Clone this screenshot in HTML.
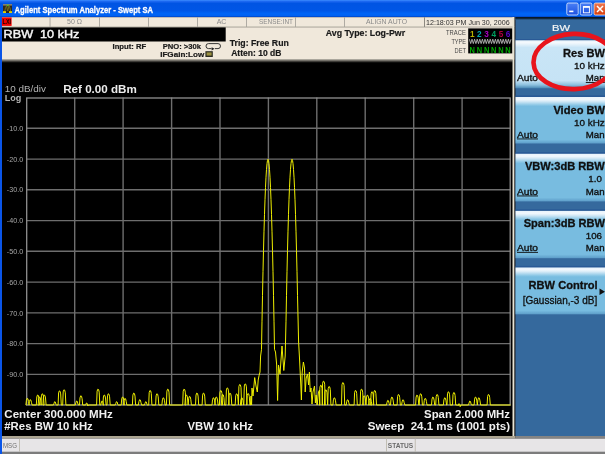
<!DOCTYPE html>
<html><head><meta charset="utf-8">
<style>
html,body{margin:0;padding:0;width:605px;height:454px;overflow:hidden;background:#000;}
svg{display:block;filter:blur(0.3px);font-family:"Liberation Sans",sans-serif;}
</style></head>
<body>
<svg width="605" height="454" viewBox="0 0 605 454">
<defs>
<linearGradient id="tb" x1="0" y1="0" x2="0" y2="1">
<stop offset="0" stop-color="#3d8dff"/>
<stop offset="0.09" stop-color="#1a66f0"/>
<stop offset="0.2" stop-color="#0054e3"/>
<stop offset="0.62" stop-color="#0056e6"/>
<stop offset="0.78" stop-color="#0064f6"/>
<stop offset="0.9" stop-color="#0062f2"/>
<stop offset="1" stop-color="#0040c0"/>
</linearGradient>
<linearGradient id="btnsel" x1="0" y1="0" x2="0" y2="1">
<stop offset="0" stop-color="#e8f3fb"/>
<stop offset="0.05" stop-color="#f4f9fd"/>
<stop offset="0.15" stop-color="#c9e5f6"/>
<stop offset="0.84" stop-color="#c6e3f5"/>
<stop offset="0.93" stop-color="#8cc0de"/>
<stop offset="1" stop-color="#4a88b4"/>
</linearGradient>
<linearGradient id="btn" x1="0" y1="0" x2="0" y2="1">
<stop offset="0" stop-color="#e8f3fb"/>
<stop offset="0.05" stop-color="#f2f8fd"/>
<stop offset="0.09" stop-color="#d8ebf7"/>
<stop offset="0.17" stop-color="#8ec8e6"/>
<stop offset="0.2" stop-color="#78bce0"/>
<stop offset="0.92" stop-color="#78bce0"/>
<stop offset="1" stop-color="#5c9cc8"/>
</linearGradient>
<linearGradient id="xbtn" x1="0" y1="0" x2="0" y2="1">
<stop offset="0" stop-color="#4a80f6"/>
<stop offset="1" stop-color="#1c50e0"/>
</linearGradient>
<linearGradient id="cbtn" x1="0" y1="0" x2="0" y2="1">
<stop offset="0" stop-color="#f07850"/>
<stop offset="1" stop-color="#d8400e"/>
</linearGradient>
<linearGradient id="ptop" x1="0" y1="0" x2="0" y2="1">
<stop offset="0" stop-color="#061420"/>
<stop offset="0.45" stop-color="#0e2236"/>
<stop offset="1" stop-color="#35699d"/>
</linearGradient>
</defs>

<!-- title bar -->
<rect x="0" y="0" width="605" height="17.2" fill="url(#tb)"/>
<rect x="3" y="4.2" width="9" height="8.8" fill="#2c2820"/>
<rect x="3" y="4.2" width="9" height="1.3" fill="#9c9480"/>
<rect x="6.8" y="4.6" width="1.8" height="1.6" fill="#58c020"/>
<path d="M4.5 12 L5.5 8 L6.5 6 L7.7 11 L9 6 L10 8 L10.8 12" stroke="#787018" stroke-width="0.9" fill="none"/>
<rect x="3" y="11.2" width="3" height="1.8" fill="#e0d000"/>
<rect x="9" y="11.2" width="3" height="1.8" fill="#e0d000"/>
<text x="14.6" y="13" font-size="9.6" font-weight="bold" fill="#ffffff" stroke="#ffffff" stroke-width="0.3" textLength="138.4" lengthAdjust="spacingAndGlyphs">Agilent Spectrum Analyzer - Swept SA</text>
<rect x="566.8" y="3" width="11.4" height="12" rx="1.5" fill="url(#xbtn)" stroke="#e8f0ff" stroke-width="0.8"/>
<rect x="569.2" y="10.6" width="4.2" height="1.6" fill="#fff"/>
<rect x="580.3" y="3" width="11.6" height="12" rx="1.5" fill="url(#xbtn)" stroke="#e8f0ff" stroke-width="0.8"/>
<rect x="583.4" y="6.6" width="6" height="6.2" fill="none" stroke="#fff" stroke-width="0.9"/>
<rect x="583.2" y="6.2" width="6.4" height="1.6" fill="#fff"/>
<rect x="594" y="3" width="12" height="12" rx="1.5" fill="url(#cbtn)" stroke="#f8e8e0" stroke-width="0.8"/>
<path d="M597 6 L603 12 M603 6 L597 12" stroke="#fff" stroke-width="1.5"/>

<!-- left border -->
<rect x="0" y="17" width="2" height="437" fill="#0a55e8"/>

<!-- status row -->
<rect x="2" y="17.2" width="512.5" height="9.8" fill="#f0e8db"/>
<rect x="2" y="26" width="512.5" height="1.2" fill="#cfcabd"/>
<rect x="1.9" y="17.4" width="9.7" height="8.5" fill="#f00000"/>
<text x="2.6" y="24.2" font-size="6.6" font-weight="bold" fill="#200000" textLength="8.4" lengthAdjust="spacingAndGlyphs">LXI</text>
<g fill="#a8a49c">
<rect x="49.6" y="17.2" width="0.9" height="9.8"/>
<rect x="99" y="17.2" width="0.9" height="9.8"/>
<rect x="148" y="17.2" width="0.9" height="9.8"/>
<rect x="197" y="17.2" width="0.9" height="9.8"/>
<rect x="246" y="17.2" width="0.9" height="9.8"/>
<rect x="295" y="17.2" width="0.9" height="9.8"/>
<rect x="344" y="17.2" width="0.9" height="9.8"/>
<rect x="424" y="17.2" width="1" height="9.8" fill="#8c8880"/>
</g>
<g font-size="7" fill="#8a8a8a" transform="translate(0,-0.4)">
<text x="74.5" y="24.8" text-anchor="middle">50 Ω</text>
<text x="221.5" y="24.8" text-anchor="middle">AC</text>
<text x="259" y="24.8" textLength="34" lengthAdjust="spacingAndGlyphs">SENSE:INT</text>
<text x="366" y="24.8" textLength="41" lengthAdjust="spacingAndGlyphs">ALIGN AUTO</text>
</g>
<text x="426" y="24.9" font-size="7.4" fill="#303030" textLength="83.6" lengthAdjust="spacingAndGlyphs">12:18:03 PM Jun 30, 2006</text>

<!-- info area -->
<rect x="2" y="27.2" width="512.5" height="32.4" fill="#f0e8db"/>
<rect x="2" y="59.5" width="510.5" height="1" fill="#c6c2b6"/>
<rect x="2" y="60.5" width="510.5" height="1" fill="#85817a"/>
<rect x="2" y="61.5" width="510.5" height="1" fill="#3a3834"/>
<rect x="2" y="27.4" width="223.7" height="14.1" fill="#000"/>
<text x="3.6" y="38.3" font-size="11.8" fill="#f4f4f4" stroke="#f4f4f4" stroke-width="0.45" textLength="75.8" lengthAdjust="spacingAndGlyphs" xml:space="preserve">RBW  10 kHz</text>
<g font-weight="bold" fill="#1a1a1a" stroke="#1a1a1a" stroke-width="0.2">
<text x="112.5" y="48.7" font-size="7.4" textLength="33.7" lengthAdjust="spacingAndGlyphs">Input: RF</text>
<text x="162.7" y="48.9" font-size="7.4" textLength="38.3" lengthAdjust="spacingAndGlyphs">PNO: &gt;30k</text>
<text x="160.2" y="57.2" font-size="7.4" textLength="44" lengthAdjust="spacingAndGlyphs">IFGain:Low</text>
<text x="229.7" y="45.6" font-size="9" textLength="59.1" lengthAdjust="spacingAndGlyphs">Trig: Free Run</text>
<text x="231.2" y="55.9" font-size="9" textLength="50.2" lengthAdjust="spacingAndGlyphs">Atten: 10 dB</text>
<text x="325.8" y="35.6" font-size="9" textLength="79.3" lengthAdjust="spacingAndGlyphs">Avg Type: Log-Pwr</text>
</g>
<path d="M211.5 48.6 L208.5 48.6 A2.5 2.5 0 0 1 208.5 43.6 L218 43.6 A2.5 2.5 0 0 1 218 48.6 L215 48.6" fill="none" stroke="#222" stroke-width="0.9"/>
<path d="M211.6 47.2 L214.6 48.8 L211.6 50.4 Z" fill="#222"/>
<rect x="205.4" y="51.2" width="7.4" height="5.8" fill="#2a2a20"/>
<rect x="206.6" y="52.4" width="5" height="3.2" fill="#9a9040"/>

<!-- trace legend -->
<rect x="468.2" y="28.4" width="44.2" height="25" fill="#000"/>
<g font-size="7.8" fill="#484848" text-anchor="end">
<text x="465.8" y="34.6" textLength="19.8" lengthAdjust="spacingAndGlyphs">TRACE</text>
<text x="466" y="44.2" textLength="14.6" lengthAdjust="spacingAndGlyphs">TYPE</text>
<text x="466" y="53.4" textLength="11.4" lengthAdjust="spacingAndGlyphs">DET</text>
</g>
<g font-size="9.2" font-weight="bold" text-anchor="middle">
<text x="472.2" y="36.6" fill="#b8b000" textLength="4.6" lengthAdjust="spacingAndGlyphs">1</text>
<text x="479.4" y="36.6" fill="#00a8b0" textLength="4.6" lengthAdjust="spacingAndGlyphs">2</text>
<text x="486.6" y="36.6" fill="#a800c0" textLength="4.6" lengthAdjust="spacingAndGlyphs">3</text>
<text x="493.8" y="36.6" fill="#00a060" textLength="4.6" lengthAdjust="spacingAndGlyphs">4</text>
<text x="501.0" y="36.6" fill="#b00040" textLength="4.6" lengthAdjust="spacingAndGlyphs">5</text>
<text x="508.0" y="36.6" fill="#5808c8" textLength="4.6" lengthAdjust="spacingAndGlyphs">6</text>
</g>
<path d="M469.4 39.2 L470.7 43.6 L472.0 39.2 L473.3 43.6 L474.6 39.2 L475.9 43.6 L477.2 39.2 L478.5 43.6 L479.8 39.2 L481.1 43.6 L482.4 39.2 L483.7 43.6 L485.0 39.2 L486.3 43.6 L487.6 39.2 L488.9 43.6 L490.2 39.2 L491.5 43.6 L492.8 39.2 L494.1 43.6 L495.4 39.2 L496.7 43.6 L498.0 39.2 L499.3 43.6 L500.6 39.2 L501.9 43.6 L503.2 39.2 L504.5 43.6 L505.8 39.2 L507.1 43.6 L508.4 39.2 L509.7 43.6 L511.0 39.2" stroke="#c8c8c8" stroke-width="0.8" fill="none"/>
<g font-size="8.6" font-weight="bold" fill="#00a800" text-anchor="middle">
<text x="472.2" y="52.9" textLength="5.4" lengthAdjust="spacingAndGlyphs">N</text>
<text x="479.4" y="52.9" textLength="5.4" lengthAdjust="spacingAndGlyphs">N</text>
<text x="486.6" y="52.9" textLength="5.4" lengthAdjust="spacingAndGlyphs">N</text>
<text x="493.8" y="52.9" textLength="5.4" lengthAdjust="spacingAndGlyphs">N</text>
<text x="501.0" y="52.9" textLength="5.4" lengthAdjust="spacingAndGlyphs">N</text>
<text x="508.0" y="52.9" textLength="5.4" lengthAdjust="spacingAndGlyphs">N</text>
</g>

<!-- graph area -->
<rect x="2" y="62.5" width="510.5" height="373.5" fill="#000"/>
<rect x="512.5" y="17" width="2" height="421" fill="#e8e4d4"/>
<rect x="514.5" y="17" width="1" height="421" fill="#404040"/>

<text x="4.8" y="92.2" font-size="9" fill="#b4b4b4" textLength="41.2" lengthAdjust="spacingAndGlyphs">10 dB/div</text>
<text x="4.8" y="101.3" font-size="9" font-weight="bold" fill="#b4b4b4" textLength="16.6" lengthAdjust="spacingAndGlyphs">Log</text>
<text x="63.2" y="92.5" font-size="11.4" font-weight="bold" fill="#ececec" textLength="73.6" lengthAdjust="spacingAndGlyphs">Ref 0.00 dBm</text>
<g font-size="7.2" fill="#a8a8a8"><text x="23.2" y="130.9" text-anchor="end">-10.0</text><text x="23.2" y="161.7" text-anchor="end">-20.0</text><text x="23.2" y="192.4" text-anchor="end">-30.0</text><text x="23.2" y="223.2" text-anchor="end">-40.0</text><text x="23.2" y="253.9" text-anchor="end">-50.0</text><text x="23.2" y="284.7" text-anchor="end">-60.0</text><text x="23.2" y="315.5" text-anchor="end">-70.0</text><text x="23.2" y="346.2" text-anchor="end">-80.0</text><text x="23.2" y="377.0" text-anchor="end">-90.0</text></g>

<g stroke="#6e6e6e" stroke-width="1.4">
<line x1="74.7" y1="97.6" x2="74.7" y2="405.1"/>
<line x1="123.1" y1="97.6" x2="123.1" y2="405.1"/>
<line x1="171.6" y1="97.6" x2="171.6" y2="405.1"/>
<line x1="220.0" y1="97.6" x2="220.0" y2="405.1"/>
<line x1="268.4" y1="97.6" x2="268.4" y2="405.1"/>
<line x1="316.8" y1="97.6" x2="316.8" y2="405.1"/>
<line x1="365.2" y1="97.6" x2="365.2" y2="405.1"/>
<line x1="413.7" y1="97.6" x2="413.7" y2="405.1"/>
<line x1="462.1" y1="97.6" x2="462.1" y2="405.1"/>
<line x1="26.3" y1="128.3" x2="510.5" y2="128.3"/>
<line x1="26.3" y1="159.1" x2="510.5" y2="159.1"/>
<line x1="26.3" y1="189.8" x2="510.5" y2="189.8"/>
<line x1="26.3" y1="220.6" x2="510.5" y2="220.6"/>
<line x1="26.3" y1="251.3" x2="510.5" y2="251.3"/>
<line x1="26.3" y1="282.1" x2="510.5" y2="282.1"/>
<line x1="26.3" y1="312.9" x2="510.5" y2="312.9"/>
<line x1="26.3" y1="343.6" x2="510.5" y2="343.6"/>
<line x1="26.3" y1="374.4" x2="510.5" y2="374.4"/>
</g>
<rect x="26.7" y="98" width="483.5" height="307" fill="none" stroke="#909090" stroke-width="1.3"/>
<polyline points="26.5,405.0 25.9,405.0 26.4,400.4 27.1,398.4 27.9,398.8 28.5,401.4 29.1,405.0 28.9,405.0 29.4,401.7 30.1,399.7 30.9,400.1 31.5,402.7 32.1,405.0 36.3,405.0 36.8,397.0 37.5,395.0 38.3,395.4 38.9,398.0 39.5,405.0 38.1,405.0 38.6,399.0 39.3,397.0 40.1,397.4 40.7,400.0 41.3,405.0 40.9,405.0 41.4,395.8 42.1,393.8 42.9,394.2 43.5,396.8 44.1,405.0 42.9,405.0 43.4,397.0 44.1,395.0 44.9,395.4 45.5,398.0 46.1,405.0 53.4,405.0 53.9,403.7 54.6,401.7 55.4,402.1 56.0,404.7 56.6,405.0 58.1,405.0 58.6,392.9 59.3,390.9 60.1,391.3 60.7,393.9 61.3,405.0 62.7,405.0 63.2,391.8 63.9,389.8 64.7,390.2 65.3,392.8 65.9,405.0 75.3,405.0 75.8,403.0 76.5,401.0 77.3,401.4 77.9,404.0 78.5,405.0 79.5,405.0 80.0,397.8 80.7,395.8 81.5,396.2 82.1,398.8 82.7,405.0 85.2,405.0 85.7,405.0 86.4,403.0 87.2,403.4 87.8,406.0 88.4,405.0 96.6,405.0 97.1,391.2 97.8,389.2 98.6,389.6 99.2,392.2 99.8,405.0 100.7,405.0 101.2,403.0 101.9,401.0 102.7,401.4 103.3,404.0 103.9,405.0 102.9,405.0 103.4,397.0 104.1,395.0 104.9,395.4 105.5,398.0 106.1,405.0 107.0,405.0 107.5,395.8 108.2,393.8 109.0,394.2 109.6,396.8 110.2,405.0 115.2,405.0 115.7,403.7 116.4,401.7 117.2,402.1 117.8,404.7 118.4,405.0 121.2,405.0 121.7,399.0 122.4,397.0 123.2,397.4 123.8,400.0 124.4,405.0 123.6,405.0 124.1,400.4 124.8,398.4 125.6,398.8 126.2,401.4 126.8,405.0 132.4,405.0 132.9,395.1 133.6,393.1 134.4,393.5 135.0,396.1 135.6,405.0 138.4,405.0 138.9,401.7 139.6,399.7 140.4,400.1 141.0,402.7 141.6,405.0 144.4,405.0 144.9,403.7 145.6,401.7 146.4,402.1 147.0,404.7 147.6,405.0 148.7,405.0 149.2,392.5 149.9,390.5 150.7,390.9 151.3,393.5 151.9,405.0 155.6,405.0 156.1,395.8 156.8,393.8 157.6,394.2 158.2,396.8 158.8,405.0 161.9,405.0 162.4,399.8 163.1,397.8 163.9,398.2 164.5,400.8 165.1,405.0 166.4,405.0 166.9,391.2 167.6,389.2 168.4,389.6 169.0,392.2 169.6,405.0 182.7,405.0 183.2,391.2 183.9,389.2 184.7,389.6 185.3,392.2 185.9,405.0 184.9,405.0 185.4,397.0 186.1,395.0 186.9,395.4 187.5,398.0 188.1,405.0 188.2,405.0 188.7,398.4 189.4,396.4 190.2,396.8 190.8,399.4 191.4,405.0 195.5,405.0 196.0,395.1 196.7,393.1 197.5,393.5 198.1,396.1 198.7,405.0 202.1,405.0 202.6,395.1 203.3,393.1 204.1,393.5 204.7,396.1 205.3,405.0 212.0,405.0 212.5,399.8 213.2,397.8 214.0,398.2 214.6,400.8 215.2,405.0 214.9,405.0 215.4,399.0 216.1,397.0 216.9,397.4 217.5,400.0 218.1,405.0 219.4,405.0 219.9,392.5 220.6,390.5 221.4,390.9 222.0,393.5 222.6,405.0 221.3,405.0 221.8,396.5 222.5,394.5 223.3,394.9 223.9,397.5 224.5,405.0 225.9,405.0 226.4,389.9 227.1,387.9 227.9,388.3 228.5,390.9 229.1,405.0 228.6,405.0 229.1,395.1 229.8,393.1 230.6,393.5 231.2,396.1 231.8,405.0 235.2,405.0 235.7,395.8 236.4,393.8 237.2,394.2 237.8,396.8 238.4,405.0 238.4,405.0 238.9,386.5 239.6,384.5 240.4,384.9 241.0,387.5 241.6,405.0 240.4,405.0 240.9,399.8 241.6,397.8 242.4,398.2 243.0,400.8 243.6,405.0 243.8,405.0 244.3,385.9 245.0,383.9 245.8,384.3 246.4,386.9 247.0,405.0 246.7,405.0 247.2,395.5 247.9,393.5 248.7,393.9 249.3,396.5 249.9,405.0 250.0,405.0 250.4,405.0 251.0,396.0 251.6,405.0 252.0,388.0 253.0,396.0 254.7,377.6 256.0,386.0 257.3,392.0 258.2,380.0 259.0,375.8 260.0,372.0 260.6,356.0 261.5,349.3 262.0,321.2 262.5,295.3 263.0,271.7 263.5,250.3 264.0,231.2 264.5,214.3 265.0,199.7 265.5,187.3 266.0,177.2 266.5,169.3 267.0,163.7 267.5,160.3 268.0,159.2 268.5,160.3 269.0,163.7 269.5,169.3 270.0,177.2 270.5,187.3 271.0,199.7 271.5,214.3 272.0,231.2 272.5,250.3 273.0,271.7 273.5,295.3 274.0,321.2 274.5,349.3 275.5,352.0 276.7,365.0 277.6,400.5 278.5,365.0 280.0,374.0 282.0,346.0 283.8,370.5 285.2,356.0 286.0,321.2 286.5,295.3 287.0,271.7 287.5,250.3 288.0,231.2 288.5,214.3 289.0,199.7 289.5,187.3 290.0,177.2 290.5,169.3 291.0,163.7 291.5,160.3 292.0,159.2 292.5,160.3 293.0,163.7 293.5,169.3 294.0,177.2 294.5,187.3 295.0,199.7 295.5,214.3 296.0,231.2 296.5,250.3 297.0,271.7 297.5,295.3 298.6,342.0 299.6,360.0 300.8,385.0 301.4,400.0 302.2,372.0 303.4,362.0 304.5,368.0 305.2,392.0 306.2,378.0 307.5,374.0 308.6,385.0 309.4,372.0 310.2,392.0 311.0,388.0 312.0,404.0 313.0,392.0 314.5,386.0 315.4,403.0 316.2,395.0 317.2,405.0 318.5,392.0 319.5,390.0 320.0,405.0 319.4,405.0 319.9,387.2 320.6,385.2 321.4,385.6 322.0,388.2 322.6,405.0 322.1,405.0 322.6,383.2 323.3,381.2 324.1,381.6 324.7,384.2 325.3,405.0 324.4,405.0 324.9,391.8 325.6,389.8 326.4,390.2 327.0,392.8 327.6,405.0 327.7,405.0 328.2,388.5 328.9,386.5 329.7,386.9 330.3,389.5 330.9,405.0 332.9,405.0 333.4,399.8 334.1,397.8 334.9,398.2 335.5,400.8 336.1,405.0 341.5,405.0 342.0,384.6 342.7,382.6 343.5,383.0 344.1,385.6 344.7,405.0 346.2,405.0 346.7,401.8 347.4,399.8 348.2,400.2 348.8,402.8 349.4,405.0 354.1,405.0 354.6,392.5 355.3,390.5 356.1,390.9 356.7,393.5 357.3,405.0 360.1,405.0 360.6,391.2 361.3,389.2 362.1,389.6 362.7,392.2 363.3,405.0 362.7,405.0 363.2,397.8 363.9,395.8 364.7,396.2 365.3,398.8 365.9,405.0 366.0,405.0 366.5,397.1 367.2,395.1 368.0,395.5 368.6,398.1 369.2,405.0 368.7,405.0 369.2,400.4 369.9,398.4 370.7,398.8 371.3,401.4 371.9,405.0 370.6,405.0 371.1,393.8 371.8,391.8 372.6,392.2 373.2,394.8 373.8,405.0 373.3,405.0 373.8,392.5 374.5,390.5 375.3,390.9 375.9,393.5 376.5,405.0 386.5,405.0 387.0,402.4 387.7,400.4 388.5,400.8 389.1,403.4 389.7,405.0 390.5,405.0 391.0,399.1 391.7,397.1 392.5,397.5 393.1,400.1 393.7,405.0 397.1,405.0 397.6,396.5 398.3,394.5 399.1,394.9 399.7,397.5 400.3,405.0 401.6,405.0 402.1,401.8 402.8,399.8 403.6,400.2 404.2,402.8 404.8,405.0 415.6,405.0 416.1,397.1 416.8,395.1 417.6,395.5 418.2,398.1 418.8,405.0 419.2,405.0 419.7,395.8 420.4,393.8 421.2,394.2 421.8,396.8 422.4,405.0 423.8,405.0 424.3,400.4 425.0,398.4 425.8,398.8 426.4,401.4 427.0,405.0 431.5,405.0 432.0,399.1 432.7,397.1 433.5,397.5 434.1,400.1 434.7,405.0 435.7,405.0 436.2,396.5 436.9,394.5 437.7,394.9 438.3,397.5 438.9,405.0 443.4,405.0 443.9,399.8 444.6,397.8 445.4,398.2 446.0,400.8 446.6,405.0 447.0,405.0 447.5,393.8 448.2,391.8 449.0,392.2 449.6,394.8 450.2,405.0 452.5,405.0 453.0,394.5 453.7,392.5 454.5,392.9 455.1,395.5 455.7,405.0 457.6,405.0 458.1,405.7 458.8,403.7 459.6,404.1 460.2,406.7 460.8,405.0 468.5,405.0 469.0,403.1 469.7,401.1 470.5,401.5 471.1,404.1 471.7,405.0 474.1,405.0 474.6,399.1 475.3,397.1 476.1,397.5 476.7,400.1 477.3,405.0 477.4,405.0 477.9,399.8 478.6,397.8 479.4,398.2 480.0,400.8 480.6,405.0 487.1,405.0 487.6,396.5 488.3,394.5 489.1,394.9 489.7,397.5 490.3,405.0 510.5,405.0" fill="none" stroke="#f0f000" stroke-width="1" stroke-linejoin="round"/>

<g font-weight="bold" fill="#f0f0f0" font-size="10.8">
<text x="4.3" y="417.5" textLength="108.5" lengthAdjust="spacingAndGlyphs">Center 300.000 MHz</text>
<text x="4.3" y="430.4" textLength="88.5" lengthAdjust="spacingAndGlyphs">#Res BW 10 kHz</text>
<text x="187.5" y="430.4" textLength="65.5" lengthAdjust="spacingAndGlyphs">VBW 10 kHz</text>
<text x="510" y="417.5" text-anchor="end" textLength="85.9" lengthAdjust="spacingAndGlyphs">Span 2.000 MHz</text>
<text x="510" y="430.4" text-anchor="end" textLength="142.3" lengthAdjust="spacingAndGlyphs" xml:space="preserve">Sweep  24.1 ms (1001 pts)</text>
</g>

<!-- bottom bar -->
<rect x="2" y="436" width="513.5" height="2.5" fill="#aca592"/>
<rect x="515.5" y="436" width="89.5" height="2.5" fill="#848484"/>
<rect x="2" y="438.5" width="603" height="15.5" fill="#e7e5e7"/>
<rect x="2" y="451.7" width="603" height="2.3" fill="#7c7c7c"/>
<rect x="19" y="438.5" width="0.8" height="13.2" fill="#b8b4a8"/>
<rect x="386.2" y="438.5" width="0.8" height="13.2" fill="#b8b4a8"/>
<rect x="414.8" y="438.5" width="0.8" height="13.2" fill="#b8b4a8"/>
<text x="3" y="447.9" font-size="7" fill="#707070" textLength="14" lengthAdjust="spacingAndGlyphs">MSG</text>
<text x="387.8" y="447.9" font-size="7" font-weight="bold" fill="#6a6a6a" textLength="25.4" lengthAdjust="spacingAndGlyphs">STATUS</text>

<!-- right panel -->
<rect x="515.5" y="17" width="89.5" height="419" fill="#35699d"/>
<rect x="515.5" y="17" width="89.5" height="3" fill="url(#ptop)"/>
<text x="561" y="31.4" font-size="9.8" fill="#f4f4f4" stroke="#f4f4f4" stroke-width="0.2" text-anchor="middle" textLength="18" lengthAdjust="spacingAndGlyphs">BW</text>

<rect x="515.5" y="39" width="89.5" height="1.4" fill="#2a5a96"/>
<rect x="515.5" y="95.4" width="89.5" height="1.6" fill="#2a5a96"/>
<rect x="515.5" y="152.2" width="89.5" height="1.6" fill="#2a5a96"/>
<rect x="515.5" y="209.3" width="89.5" height="1.6" fill="#2a5a96"/>
<rect x="515.5" y="265.9" width="89.5" height="1.6" fill="#2a5a96"/>
<rect x="515.5" y="40.3" width="89.5" height="48" fill="url(#btnsel)"/>
<rect x="515.5" y="97" width="89.5" height="46.5" fill="url(#btn)"/>
<rect x="515.5" y="153.8" width="89.5" height="47.6" fill="url(#btn)"/>
<rect x="515.5" y="210.9" width="89.5" height="47.3" fill="url(#btn)"/>
<rect x="515.5" y="267.5" width="89.5" height="46.8" fill="url(#btn)"/>

<g fill="#101010" stroke="#101010" stroke-width="0.12">
<text x="605" y="56.6" font-size="11.1" font-weight="bold" stroke-width="0.3" text-anchor="end">Res BW</text>
<text x="604.8" y="69.4" font-size="9.9" stroke-width="0.35" text-anchor="end">10 kHz</text>
<text x="517" y="81" font-size="9.9" stroke-width="0.35" textLength="21" lengthAdjust="spacingAndGlyphs">Auto</text>
<text x="604.6" y="81" font-size="9.8" text-anchor="end" stroke-width="0.35" textLength="18.8" lengthAdjust="spacingAndGlyphs">Man</text>

<text x="605" y="113.6" font-size="11.1" font-weight="bold" stroke-width="0.3" text-anchor="end">Video BW</text>
<text x="604.8" y="125.6" font-size="9.9" stroke-width="0.35" text-anchor="end">10 kHz</text>
<text x="517" y="137.6" font-size="9.9" stroke-width="0.35" textLength="21" lengthAdjust="spacingAndGlyphs">Auto</text>
<text x="604.6" y="137.6" font-size="9.8" text-anchor="end" stroke-width="0.35" textLength="18.8" lengthAdjust="spacingAndGlyphs">Man</text>

<text x="604.8" y="170" font-size="11.1" font-weight="bold" stroke-width="0.3" text-anchor="end">VBW:3dB RBW</text>
<text x="601.8" y="182.4" font-size="9.7" stroke-width="0.35" text-anchor="end">1.0</text>
<text x="517" y="194.6" font-size="9.9" stroke-width="0.35" textLength="21" lengthAdjust="spacingAndGlyphs">Auto</text>
<text x="604.6" y="194.6" font-size="9.8" text-anchor="end" stroke-width="0.35" textLength="18.8" lengthAdjust="spacingAndGlyphs">Man</text>

<text x="605" y="226.8" font-size="11.1" font-weight="bold" stroke-width="0.3" text-anchor="end">Span:3dB RBW</text>
<text x="602" y="238.8" font-size="9.7" stroke-width="0.35" text-anchor="end">106</text>
<text x="517" y="251" font-size="9.9" stroke-width="0.35" textLength="21" lengthAdjust="spacingAndGlyphs">Auto</text>
<text x="604.6" y="251" font-size="9.8" text-anchor="end" stroke-width="0.35" textLength="18.8" lengthAdjust="spacingAndGlyphs">Man</text>

<text x="597.6" y="288.6" font-size="11.1" font-weight="bold" stroke-width="0.3" text-anchor="end">RBW Control</text>
<text x="597.2" y="303.6" font-size="10" stroke-width="0.3" text-anchor="end">[Gaussian,-3 dB]</text>
</g>
<g fill="#101010">
<rect x="517" y="138.5" width="21" height="0.9"/>
<rect x="517" y="195.5" width="21" height="0.9"/>
<rect x="517" y="251.9" width="21" height="0.9"/>
<rect x="585.8" y="82" width="19" height="0.9"/>
<path d="M599.5 288.5 L605 291.8 L599.5 295 Z"/>
</g>
<ellipse cx="574" cy="61.5" rx="40.5" ry="27.6" fill="none" stroke="#e8141c" stroke-width="4.6" transform="rotate(-2 574 61.5)"/>
</svg>
</body></html>
